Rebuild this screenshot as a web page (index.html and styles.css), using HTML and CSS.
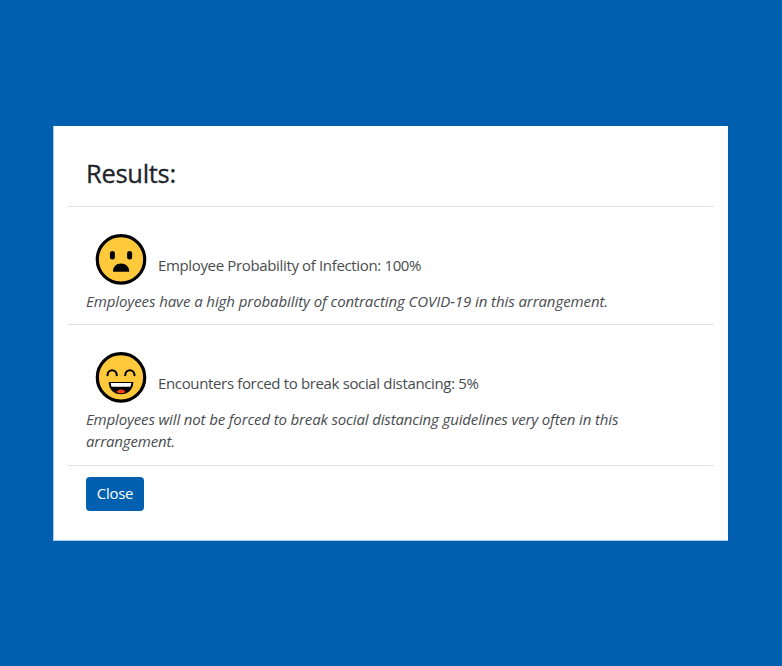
FILE: index.html
```html
<!DOCTYPE html>
<html lang="en">
<head>
<meta charset="utf-8">
<title>Results</title>
<link rel="stylesheet" href="styles.css">
</head>
<body>
<main class="card">
  <header class="header"><h1 class="title">Results:</h1></header>
  <section class="result">
    <div class="summary">
      <svg class="face" viewBox="0 0 52 52" aria-hidden="true">
        <circle cx="26" cy="26.4" r="23.7" fill="#ffc93c" stroke="#000" stroke-width="3.2"/>
        <rect x="14.9" y="18" width="5" height="8.4" rx="2.5"/>
        <rect x="32.1" y="18" width="5" height="8.4" rx="2.5"/>
        <path d="M18 38.8C17.8 33.7 21.3 30.5 26 30.5s8.4 3.2 8.2 8.3z"/>
      </svg>
      <span class="label">Employee Probability of Infection: 100%</span>
    </div>
    <p class="note high">Employees have a high probability of contracting COVID-19 in this arrangement.</p>
  </section>
  <section class="result">
    <div class="summary">
      <svg class="face" viewBox="0 0 52 52" aria-hidden="true">
        <circle cx="26" cy="26.4" r="23.7" fill="#ffc93c" stroke="#000" stroke-width="3.2"/>
        <path d="M12.5 24.2c.2-6.6 9-6.6 9.3 0M30.2 24.2c.3-6.6 9.1-6.6 9.3 0" fill="none" stroke="#000" stroke-width="2.1" stroke-linecap="round"/>
        <path d="M13.7 31h24.6c0 7.3-5 12.3-12.3 12.3s-12.3-5-12.3-12.3z"/>
        <path d="M15.7 32.1h20.6c-.1 1.6-.5 2.7-.9 3.6H16.6c-.5-.9-.8-2-.9-3.6z" fill="#fff"/>
        <path d="M21.5 41c1.4-3.5 7.6-3.5 9 0-2.6 1.6-6.4 1.6-9 0z" fill="#ff3d16"/>
      </svg>
      <span class="label">Encounters forced to break social distancing: 5%</span>
    </div>
    <p class="note often">Employees will not be forced to break social distancing guidelines very often in this<br>arrangement.</p>
  </section>
  <footer class="footer"><button class="close" type="button">Close</button></footer>
</main>
</body>
</html>
```
FILE: styles.css
```css
* { box-sizing: border-box; }
body {
  margin: 0;
  min-height: 666px;
  padding: 126px 54px 0 53px;
  background: #005faf;
  color: #212529;
  font: 15px/22.5px "Open Sans", "Noto Sans", sans-serif;
}
.card { height: 415px; padding: 0 14px; background: #fff; border: 1px solid #a9cbe8; border-width: 0 0 1px 1px; }
.header { height: 81px; padding: 30px 18px 0; border-bottom: 1px solid #dee2e6; }
.title {
  margin: 0;
  font-size: 25.5px;
  line-height: 34px;
  font-weight: 500;
  letter-spacing: -0.3px;
  -webkit-text-stroke: 0.3px #212529;
}
.result { padding: 26px 18px 12px; border-bottom: 1px solid #dee2e6; color: #484c50; }
.summary { display: flex; height: 56.5px; padding-left: 9px; }
.face { width: 52px; height: 52px; flex: none; margin-right: 11px; }
.label { margin-top: 21px; white-space: nowrap; letter-spacing: -0.35px; }
.note { margin: 0; font-style: italic; white-space: nowrap; }
.high { letter-spacing: -0.08px; }
.often { letter-spacing: -0.14px; }
.footer { padding: 11px 18px 0; }
.close {
  display: block;
  width: 58px;
  height: 34px;
  padding: 0;
  border: 0;
  border-radius: 4px;
  background: #005faf;
  color: #fff;
  font: inherit;
  letter-spacing: -0.3px;
}
```
